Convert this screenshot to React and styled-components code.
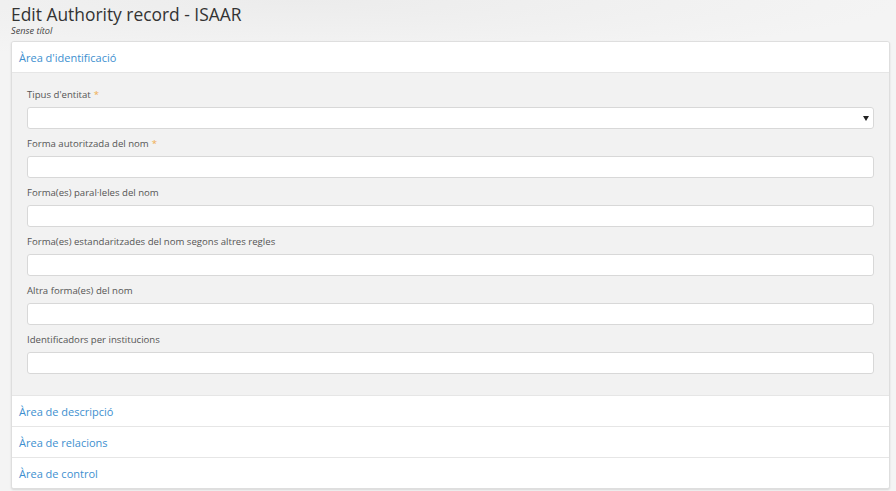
import React from "react";
import styled, { createGlobalStyle } from "styled-components";

const GlobalStyle = createGlobalStyle`
  html, body {
    margin: 0;
    padding: 0;
    background: #f4f4f4;
    font-family: "Open Sans", "Liberation Sans", sans-serif;
    color: #555;
  }
`;

const Page = styled.div`
  width: 896px;
  height: 491px;
  overflow: hidden;
  box-sizing: border-box;
  padding: 0 8px 0 11px;
  background: radial-gradient(ellipse 600px 60px at 300px 0, #ececec 0%, #f4f4f4 100%);
`;

const Heading = styled.div`
  padding-top: 4px;
  height: 41px;
  box-sizing: border-box;
`;

const Title = styled.h1`
  margin: 0;
  font-size: 17.4px;
  font-weight: 400;
  line-height: 20px;
  color: #333;
`;

const Subtitle = styled.div`
  font-size: 9.2px;
  font-style: italic;
  line-height: 11px;
  color: #444;
  margin-top: 1px;
`;

const Panel = styled.div`
  width: 877px;
  background: #fff;
  border: 1px solid #dedede;
  border-radius: 3px;
  box-shadow: 0 1px 2px rgba(0, 0, 0, 0.12);
  overflow: hidden;
`;

const Section = styled.div`
  border-top: ${(p) => (p.first ? "none" : "1px solid #e6e6e6")};
`;

const SectionHead = styled.div`
  height: 30px;
  display: flex;
  align-items: center;
  padding-left: 7px;
  font-size: 11px;
  color: #3d8fcf;
  background: #fff;
`;

const SectionBody = styled.div`
  background: #f2f2f2;
  border-top: 1px solid #e6e6e6;
  padding: 13px 15px 21px 15px;
  display: flex;
  flex-direction: column;
  gap: 6px;
`;

const Field = styled.div`
  display: flex;
  flex-direction: column;
  gap: 3px;
`;

const Label = styled.label`
  font-size: 9.6px;
  line-height: 18px;
  color: #555;
`;

const Req = styled.span`
  color: #f0ad4e;
  margin-left: 3px;
`;

const Input = styled.div`
  height: 20px;
  background: #fff;
  border: 1px solid #d8d8d8;
  border-radius: 3px;
  position: relative;
`;

const Caret = styled.span`
  position: absolute;
  right: 4px;
  top: 8px;
  width: 0;
  height: 0;
  border-left: 3px solid transparent;
  border-right: 3px solid transparent;
  border-top: 5px solid #222;
`;

const fields = [
  { label: "Tipus d'entitat", required: true, select: true },
  { label: "Forma autoritzada del nom", required: true },
  { label: "Forma(es) paral·leles del nom" },
  { label: "Forma(es) estandaritzades del nom segons altres regles" },
  { label: "Altra forma(es) del nom" },
  { label: "Identificadors per institucions" },
];

const sections = ["Àrea de descripció", "Àrea de relacions", "Àrea de control"];

export default function App() {
  return (
    <>
      <GlobalStyle />
      <Page>
        <Heading>
          <Title>Edit Authority record - ISAAR</Title>
          <Subtitle>Sense títol</Subtitle>
        </Heading>
        <Panel>
          <Section first>
            <SectionHead>Àrea d'identificació</SectionHead>
            <SectionBody>
              {fields.map((f) => (
                <Field key={f.label}>
                  <Label>
                    {f.label}
                    {f.required && <Req>*</Req>}
                  </Label>
                  <Input>{f.select && <Caret />}</Input>
                </Field>
              ))}
            </SectionBody>
          </Section>
          {sections.map((s) => (
            <Section key={s}>
              <SectionHead>{s}</SectionHead>
            </Section>
          ))}
        </Panel>
      </Page>
    </>
  );
}
